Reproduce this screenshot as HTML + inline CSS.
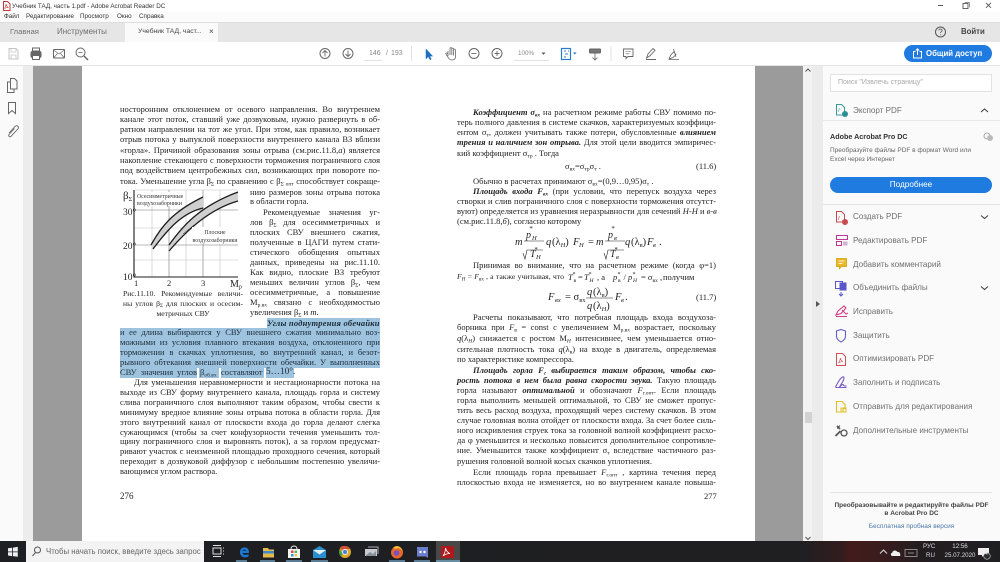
<!DOCTYPE html>
<html lang="ru"><head><meta charset="utf-8"><title>Учебник ТАД</title>
<style>
html,body{margin:0;padding:0}
body{width:1000px;height:562px;overflow:hidden;position:relative;background:#fff;font-family:"Liberation Sans","DejaVu Sans",sans-serif;color:#444}
.r{position:absolute}
.t{position:absolute;white-space:nowrap;line-height:12px;height:12px}
#doc{position:absolute;left:0;top:0;width:1000px;height:562px;font-family:"Liberation Serif",serif;color:#242424;filter:blur(.3px)}
#doc .j{position:absolute;white-space:nowrap;font-size:8.5px;line-height:12px;height:12px;text-align:justify;text-align-last:justify}
#doc .a{position:absolute;white-space:nowrap;font-size:8.5px;line-height:12px;height:12px}
.L{left:120px;width:260px}.Li{left:134px;width:246px}
.S{left:250px;width:130px}.Si{left:263px;width:117px}
.R{left:457px;width:259px}.Ri{left:473px;width:243px}
.hl{position:absolute;background:#9dc3de}
sub{font-size:.65em;line-height:0;vertical-align:-.25em}
sup{font-size:.7em;line-height:0}
.tool{position:absolute;left:853px;font-size:8.1px;color:#707070;line-height:12px;white-space:nowrap}
svg{position:absolute;overflow:visible}
</style></head><body>

<!-- title + menu -->
<div class="r" style="left:0;top:0;width:1000px;height:12px;background:#fff"></div>
<div class="r" style="left:0;top:12px;width:1000px;height:10px;background:#fbfbfb"></div>
<svg style="left:2px;top:1px" width="9" height="10"><path d="M1.5 .5h4l2.5 2.5v6.500h-6.500z" fill="#fff" stroke="#c43a3a"/><path d="M2.500 7.500c1-2 1.500-3 1.500-4.500c.5 2 1 3 2.500 3.500c-1.500 0-3 .3-4 1z" fill="none" stroke="#c43a3a" stroke-width=".6"/></svg>
<div class="t" style="left:12px;top:1px;font-size:6.300px;color:#333">Учебник ТАД, часть 1.pdf - Adobe Acrobat Reader DC</div>
<div class="t" style="left:4px;top:11px;font-size:6.300px;color:#333">Файл</div>
<div class="t" style="left:26px;top:11px;font-size:6.300px;color:#333">Редактирование</div>
<div class="t" style="left:80px;top:11px;font-size:6.300px;color:#333">Просмотр</div>
<div class="t" style="left:117px;top:11px;font-size:6.300px;color:#333">Окно</div>
<div class="t" style="left:139px;top:11px;font-size:6.300px;color:#333">Справка</div>
<svg style="left:936px;top:2px" width="60" height="10" fill="none" stroke="#555"><path d="M2 3.500h5"/><rect x="27" y="1.500" width="5" height="5" stroke-width=".9"/><path d="M29 1v-.3h4.500v4.500" stroke-width=".6"/><path d="M50 .8l5 5M55 .8l-5 5" stroke-width=".9"/></svg>

<!-- tab bar -->
<div class="r" style="left:0;top:22px;width:1000px;height:20px;background:#e6e6e6;border-top:1px solid #ddd;box-sizing:border-box"></div>
<div class="r" style="left:125px;top:23px;width:93px;height:19px;background:#fafafa"></div>
<div class="t" style="left:10px;top:26px;font-size:7.600px;color:#6f6f6f">Главная</div>
<div class="t" style="left:57px;top:26px;font-size:8px;color:#6f6f6f">Инструменты</div>
<div class="t" style="left:138px;top:26px;font-size:6.800px;color:#444">Учебник ТАД, част...</div>
<div class="t" style="left:209px;top:25.500px;font-size:8px;color:#444">×</div>
<svg style="left:934px;top:26px" width="13" height="13" fill="none" stroke="#555"><circle cx="6.500" cy="6" r="5"/><path d="M4.800 4.500c.2-2 3.500-2 3.400 0c0 1.200-1.700 1.200-1.700 2.500" stroke-width=".8"/><circle cx="6.500" cy="8.800" r=".5" fill="#555" stroke="none"/></svg>
<div class="t" style="left:961px;top:26px;font-size:7.800px;font-weight:bold;color:#444">Войти</div>

<!-- toolbar -->
<div class="r" style="left:0;top:42px;width:1000px;height:24px;background:#fff;border-bottom:1px solid #e4e4e4;box-sizing:border-box"></div>
<svg style="left:0;top:42px" width="1000" height="24" fill="none" stroke="#666">
<path d="M9 6.500h7l2 2v8.500h-9z" stroke="#c5c5c5"/><path d="M11 6.500v3.500h5v-3.500M11 17v-4h5v4" stroke="#c5c5c5" stroke-width=".8"/>
<rect x="31" y="9.500" width="10" height="6" rx="1.500" fill="#666"/><rect x="32.500" y="6" width="7" height="3" fill="none"/><rect x="32.500" y="13.500" width="7" height="4" fill="#fff"/>
<rect x="53.500" y="7.500" width="11" height="8.500" rx=".5"/><path d="M53.500 8l5.500 4l5.500-4M53.500 16l4-4.500M64.500 16l-4-4.500" stroke-width=".7"/>
<circle cx="80.500" cy="10.500" r="4.500"/><path d="M84 14l4 4" stroke-width="1.400"/><path d="M78.500 10.500h4" stroke-width=".8"/>
<circle cx="325" cy="11.500" r="5"/><path d="M325 14.500v-6M322.500 11l2.500-2.500l2.500 2.500" stroke-width=".9"/>
<circle cx="348" cy="11.500" r="5"/><path d="M348 8.500v6M345.500 12l2.500 2.500l2.500-2.500" stroke-width=".9"/>
<path d="M364 18.500h18M411.500 4v15" stroke="#e2e2e2"/>
<path d="M426 7l0 10l2.300-2.500l1.700 3.300l1.300-.7l-1.700-3h3z" fill="#1f6fc0" stroke="#1f6fc0" stroke-width=".5"/>
<path d="M448 14v-5M450 13v-6.500a.9.9 0 0 1 1.800 0v6M451.800 13v-6a.9.900 0 0 1 1.800 0v6.500M453.600 13v-5a.9.900 0 0 1 1.800 0v7c0 2-1.500 3-3.500 3c-2 0-3-1-4-3l-2-3c-.5-1 .8-1.500 1.500-.7l.6.700" stroke-width=".8"/>
<circle cx="474" cy="11.500" r="5"/><path d="M471.500 11.500h5" stroke-width=".9"/>
<circle cx="497" cy="11.500" r="5"/><path d="M494.500 11.500h5M497 9v5" stroke-width=".9"/>
<path d="M514 18.500h35" stroke="#e2e2e2"/>
<path d="M541.500 10.500l2 2.400l2-2.400z" fill="#555" stroke="none"/>
<rect x="561.500" y="6.500" width="9" height="11" fill="#fff" stroke="#2a7cc8" stroke-width="1.200"/><path d="M564 9h2M565 12h3M564 15h2M568 9h1" stroke="#2a7cc8"/>
<path d="M573 10.500l1.800 2l1.800-2z" fill="#2a6db0" stroke="none"/>
<rect x="589.500" y="7" width="11" height="4" rx=".7" fill="#777" stroke="#666"/><path d="M595 11v7M592.500 15.500l2.500 2.500l2.500-2.500" stroke-width=".8"/>
<path d="M611 4v15" stroke="#e2e2e2"/>
<path d="M623.500 7h9.500v7.500h-5l-2 2v-2h-2.500z" stroke-width=".9"/><path d="M625.500 9.500h5.500M625.500 11.800h4" stroke-width=".6"/>
<path d="M646.500 16l1.500-4l5-5.500l2 1.800l-5 5.500zM646 17.500h10" stroke-width=".9"/>
<path d="M669 17l1.500-3.500l3-3.500l2.500 2.500l-3 3zM673.500 7l2.500 8M669 17.500h10" stroke-width=".8"/>
</svg>
<div class="t" style="left:369px;top:47.500px;font-size:7px;color:#888">146</div>
<div class="t" style="left:386px;top:47.500px;font-size:7px;color:#888">/</div>
<div class="t" style="left:391px;top:47.500px;font-size:7px;color:#888">193</div>
<div class="t" style="left:518px;top:47.500px;font-size:6.300px;color:#888">100%</div>
<div class="r" style="left:904px;top:45px;width:88px;height:17px;border-radius:9px;background:#1f7be0"></div>
<svg style="left:912px;top:48px" width="12" height="11" fill="none" stroke="#fff"><path d="M3.500 3.500h-2v6.500h8v-6.500h-2M5.500 7v-6M3.800 2.500l1.700-1.700l1.700 1.700"/></svg>
<div class="t" style="left:926px;top:47.500px;font-size:7.800px;font-weight:bold;color:#fff">Общий доступ</div>

<!-- side/rail and grey -->
<div class="r" style="left:0;top:66px;width:23px;height:475px;background:#fafafa"></div>
<div class="r" style="left:23px;top:66px;width:10px;height:475px;background:#ececec"></div>
<div class="r" style="left:33px;top:66px;width:49px;height:475px;background:#9b9b9b"></div>
<div class="r" style="left:82px;top:66px;width:673px;height:475px;background:#fff"></div>
<div class="r" style="left:755px;top:66px;width:48px;height:475px;background:#9b9b9b"></div>
<div class="r" style="left:803px;top:66px;width:9px;height:475px;background:#f2f2f2"></div>
<div class="r" style="left:805px;top:412px;width:7px;height:11px;background:#d2d2d2"></div>
<div class="r" style="left:812px;top:66px;width:11px;height:475px;background:#ebebeb"></div>
<div class="r" style="left:823px;top:66px;width:177px;height:475px;background:#fafafa"></div>
<svg style="left:0;top:66px" width="30" height="80" fill="none" stroke="#666">
<path d="M10.500 12.500h4l2.500 2.500v8h-6.500z"/><path d="M10.500 16h-3v10.500h6.500v-3.500"/>
<path d="M8.500 36.500h7v11l-3.500-3l-3.500 3z"/>
<path d="M9 67l6-6.500c2-2 4.500.5 2.800 2.500l-7 7.500c-1 1-2.800-.5-1.800-2l5.500-6" stroke-width=".9"/>
</svg>
<svg style="left:804px;top:67px" width="8" height="480" fill="none" stroke="#555"><path d="M1.500 4.500l2.500-2.500l2.500 2.500M1.500 470l2.500 2.500l2.500-2.500"/></svg>
<svg style="left:815px;top:300px" width="6" height="8"><path d="M1 1l4 3l-4 3z" fill="#555"/></svg>

<!-- document -->
<div id="doc">
<div class="hl" style="left:267px;top:318px;width:113px;height:10px"></div>
<div class="hl" style="left:120px;top:328px;width:260px;height:10px"></div>
<div class="hl" style="left:120px;top:338px;width:260px;height:10px"></div>
<div class="hl" style="left:120px;top:348px;width:260px;height:10px"></div>
<div class="hl" style="left:120px;top:358px;width:260px;height:10px"></div>
<div class="hl" style="left:120px;top:368px;width:77px;height:10px"></div>
<div class="hl" style="left:199px;top:368px;width:20px;height:10px"></div>
<div class="hl" style="left:221px;top:368px;width:43px;height:10px"></div>
<div class="hl" style="left:266px;top:368px;width:28px;height:10px"></div>

<div class="j L" style="top:103px">носторонним отклонением от осевого направления. Во внутреннем</div>
<div class="j L" style="top:113px">канале этот поток, ставший уже дозвуковым, нужно развернуть в об-</div>
<div class="j L" style="top:123px">ратном направлении на тот же угол. При этом, как правило, возникает</div>
<div class="j L" style="top:133px">отрыв потока у выпуклой поверхности внутреннего канала ВЗ вблизи</div>
<div class="j L" style="top:144px">«горла». Причиной образования зоны отрыва (см.рис.11.8,<i>а</i>) является</div>
<div class="j L" style="top:154px">накопление стекающего с поверхности торможения пограничного слоя</div>
<div class="j L" style="top:164px">под воздействием центробежных сил, возникающих при повороте по-</div>
<div class="j L" style="top:175px">тока. Уменьшение угла β<sub>Σ</sub> по сравнению с β<sub>Σ опт</sub> способствует сокраще-</div>

<div class="j S" style="top:186px">нию размеров зоны отрыва потока</div>
<div class="a S" style="top:195px">в области горла.</div>
<div class="j Si" style="top:206px">Рекомендуемые значения уг-</div>
<div class="j S" style="top:216px">лов β<sub>Σ</sub> для осесимметричных и</div>
<div class="j S" style="top:226px">плоских СВУ внешнего сжатия,</div>
<div class="j S" style="top:236px">полученные в ЦАГИ путем стати-</div>
<div class="j S" style="top:246px">стического обобщения опытных</div>
<div class="j S" style="top:256px">данных, приведены на рис.11.10.</div>
<div class="j S" style="top:266px">Как видно, плоские ВЗ требуют</div>
<div class="j S" style="top:276px">меньших величин углов β<sub>Σ</sub>, чем</div>
<div class="j S" style="top:286px">осесимметричные, а повышение</div>
<div class="j S" style="top:296px">M<sub>р.вх</sub> связано с необходимостью</div>
<div class="a S" style="top:306px">увеличения β<sub>Σ</sub> и <i>m</i>.</div>

<div class="j" style="left:123px;width:120px;top:288px;font-size:7.600px">Рис.11.10. Рекомендуемые величи-</div>
<div class="j" style="left:123px;width:120px;top:298px;font-size:7.600px">ны углов β<sub>Σ</sub> для плоских и осесим-</div>
<div class="a" style="left:123px;width:120px;top:308px;text-align:center;font-size:7.600px">метричных СВУ</div>

<div class="a" style="left:267px;top:317px;font-weight:bold;font-style:italic;letter-spacing:.2px;color:#1c2b38">Углы поднутрения обечайки</div>
<div class="j L" style="top:326px;color:#1c2b38">и ее длина выбираются у СВУ внешнего сжатия минимально воз-</div>
<div class="j L" style="top:336px;color:#1c2b38">можными из условия плавного втекания воздуха, отклоненного при</div>
<div class="j L" style="top:346px;color:#1c2b38">торможении в скачках уплотнения, во внутренний канал, и безот-</div>
<div class="j L" style="top:356px;color:#1c2b38">рывного обтекания внешней поверхности обечайки. У выполненных</div>
<div class="j" style="left:120px;width:77px;top:366px;color:#1c2b38">СВУ значения углов</div>
<div class="a" style="left:200px;top:366px;color:#1c2b38">β<sub>об.вх</sub></div>
<div class="j" style="left:221px;width:43px;top:366px;color:#1c2b38">составляют</div>
<div class="a" style="left:266px;top:366px;color:#1c2b38;font-size:9.300px">5…10°.</div>

<div class="j Li" style="top:376px">Для уменьшения неравномерности и нестационарности потока на</div>
<div class="j L" style="top:386px">выходе из СВУ форму внутреннего канала, площадь горла и систему</div>
<div class="j L" style="top:396px">слива пограничного слоя выполняют таким образом, чтобы свести к</div>
<div class="j L" style="top:406px">минимуму вредное влияние зоны отрыва потока в области горла. Для</div>
<div class="j L" style="top:416px">этого внутренний канал от плоскости входа до горла делают слегка</div>
<div class="j L" style="top:426px">сужающимся (чтобы за счет конфузорности течения уменьшить тол-</div>
<div class="j L" style="top:435px">щину пограничного слоя и выровнять поток), а за горлом предусмат-</div>
<div class="j L" style="top:445px">ривают участок с неизменной площадью проходного сечения, который</div>
<div class="j L" style="top:455px">переходит в дозвуковой диффузор с небольшим постепенно увеличи-</div>
<div class="a L" style="top:465px">вающимся углом раствора.</div>
<div class="a" style="left:120px;top:490px;font-size:9px">276</div>

<!-- figure -->
<svg style="left:120px;top:185px" width="130" height="105">
<path d="M15 5H118M15 75h103M15 43h103M32 5v87M100 5v87M66 5v87" stroke="#c4c4c4" stroke-width=".6" fill="none"/>
<path d="M49 5v87M83 5v87M15 25h103M15 60h103" stroke="#777" stroke-width=".6" fill="none"/>
<path d="M31 60C41 42 52 27 83 12V23C62 28 48 44 33 64Z" fill="#cfcfcf"/>
<path d="M49 60C62 42 78 22 118 7V16C90 24 68 44 49 66Z" fill="#cfcfcf"/>
<path d="M31 60C41 42 52 27 83 12M33 64C48 44 62 28 83 23M49 60C62 42 78 22 118 7M49 66C68 44 90 24 118 16" fill="none" stroke="#1d1d1d" stroke-width="1.300"/>
<path d="M14 5V92H118" fill="none" stroke="#1d1d1d" stroke-width="1.100"/>
<rect x="17" y="7" width="47" height="14" fill="#fff"/>
<rect x="72" y="42" width="47" height="17" fill="#fff"/>
<path d="M63 49L74 40" stroke="#333" stroke-width=".5"/>
<text x="17" y="13" font-size="5.800" font-family="Liberation Serif" fill="#333">Осесимметричные</text>
<text x="17" y="20" font-size="5.800" font-family="Liberation Serif" fill="#333">воздухозаборники</text>
<text x="95" y="49" font-size="5.800" font-family="Liberation Serif" fill="#333" text-anchor="middle">Плоские</text>
<text x="95" y="57" font-size="5.800" font-family="Liberation Serif" fill="#333" text-anchor="middle">воздухозаборники</text>
<text x="3" y="14" font-size="11" font-family="Liberation Serif" fill="#222">β<tspan font-size="6" dy="2">Σ</tspan></text>
<text x="3" y="30" font-size="9.500" font-family="Liberation Serif" fill="#222">30°</text>
<text x="3" y="64" font-size="9.500" font-family="Liberation Serif" fill="#222">20°</text>
<text x="3" y="95" font-size="9.500" font-family="Liberation Serif" fill="#222">10°</text>
<text x="14" y="101" font-size="8.500" font-family="Liberation Serif" fill="#222">1</text>
<text x="47" y="101" font-size="8.500" font-family="Liberation Serif" fill="#222">2</text>
<text x="81" y="101" font-size="8.500" font-family="Liberation Serif" fill="#222">3</text>
<text x="110" y="102" font-size="10" font-family="Liberation Serif" fill="#222">M<tspan font-size="6" dy="1.500">р</tspan></text>
</svg>

<!-- right page -->
<div class="j Ri" style="top:106px"><b><i>Коэффициент σ<sub>вх</sub></i></b> на расчетном режиме работы СВУ помимо по-</div>
<div class="j R" style="top:116px">терь полного давления в системе скачков, характеризуемых коэффици-</div>
<div class="j R" style="top:126px">ентом σ<sub>т</sub>, должен учитывать также потери, обусловленные <b><i>влиянием</i></b></div>
<div class="j R" style="top:136px"><b><i>трения и наличием зон отрыва.</i></b> Для этой цели вводится эмпиричес-</div>
<div class="a R" style="top:147px">кий коэффициент σ<sub>тр</sub> . Тогда</div>
<div class="a" style="left:565px;top:160px">σ<sub>вх</sub>=σ<sub>тр</sub>σ<sub>т</sub> .</div>
<div class="a" style="left:696px;top:160px;font-size:8.500px">(11.6)</div>
<div class="a" style="left:473px;top:175px">Обычно в расчетах принимают σ<sub>вх</sub>=(0,9…0,95)σ<sub>т</sub> .</div>
<div class="j Ri" style="top:185px"><b><i>Площадь входа F<sub>вх</sub></i></b> (при условии, что перепуск воздуха через</div>
<div class="j R" style="top:195px">створки и слив пограничного слоя с поверхности торможения отсутст-</div>
<div class="j R" style="top:205px">вуют) определяется из уравнения неразрывности для сечений <i>Н-Н</i> и <i>в-в</i></div>
<div class="a R" style="top:215px">(см.рис.11.8,<i>б</i>), согласно которому</div>

<svg style="left:450px;top:220px" width="270" height="95" font-family="Liberation Serif" fill="#242424" font-size="10.500">
<g font-style="italic">
<text x="65" y="25">m</text><text x="76" y="18" font-size="10">p</text><text x="82" y="20" font-size="6.500">H</text><text x="79" y="11" font-size="7">*</text>
<text x="96" y="25">q</text>
<text x="123" y="25">F</text><text x="129" y="27" font-size="6.500">H</text>
<text x="146" y="25">m</text><text x="158" y="18" font-size="10">p</text><text x="164" y="20" font-size="6.500">в</text><text x="161" y="11" font-size="7">*</text>
<text x="175" y="25">q</text><text x="197" y="25">F</text><text x="203" y="27" font-size="6.500">в</text>
<text x="80" y="37" font-size="10">T</text><text x="86" y="39" font-size="6.500">H</text><text x="84" y="32" font-size="7">*</text>
<text x="160" y="37" font-size="10">T</text><text x="166" y="39" font-size="6.500">в</text><text x="164" y="32" font-size="7">*</text>
</g>
<text x="102" y="25">(λ<tspan font-size="6.500" dy="2" font-style="italic">H</tspan><tspan dy="-2">)</tspan></text>
<text x="138" y="25">=</text>
<text x="181" y="25">(λ<tspan font-size="6.500" dy="2">в</tspan><tspan dy="-2">)</tspan></text>
<text x="209" y="25">.</text>
<path d="M74 21h20M155 21h20M73 33l2 6l2-9h16M154 33l2 6l2-9h16" fill="none" stroke="#242424" stroke-width=".6"/>

<!-- T* line -->
<g font-size="8.500">
<text x="118" y="60" font-style="italic">T</text><text x="123.500" y="62" font-size="5.500">в</text><text x="122.500" y="56" font-size="6">*</text>
<text x="128" y="60">=</text>
<text x="134" y="60" font-style="italic">T</text><text x="139.500" y="62" font-size="5.500" font-style="italic">H</text><text x="138.500" y="56" font-size="6">*</text>
<text x="147" y="60">, а</text>
<text x="163" y="60" font-style="italic">p</text><text x="168" y="62" font-size="5.500">в</text><text x="167.500" y="56" font-size="6">*</text>
<text x="173.500" y="60">/</text>
<text x="178" y="60" font-style="italic">p</text><text x="183" y="62" font-size="5.500" font-style="italic">H</text><text x="182.500" y="56" font-size="6">*</text>
<text x="191" y="60">= σ<tspan font-size="5.500" dy="2">вх</tspan><tspan dy="-2"> ,</tspan></text>
<text x="213" y="60">получим</text>
</g>

<!-- 11.7 -->
<g font-style="italic">
<text x="98" y="80">F</text><text x="105" y="82" font-size="6.500">вх</text>
<text x="137" y="75" font-size="10.500">q</text>
<text x="137" y="89" font-size="10.500">q</text>
<text x="165" y="80">F</text><text x="171" y="82" font-size="6.500">в</text>
</g>
<text x="115" y="80">= σ<tspan font-size="6.500" dy="2">вх</tspan></text>
<text x="143" y="75" font-size="10.500">(λ<tspan font-size="6.500" dy="2">в</tspan><tspan dy="-2">)</tspan></text>
<text x="143" y="89" font-size="10.500">(λ<tspan font-size="6.500" dy="2" font-style="italic">H</tspan><tspan dy="-2">)</tspan></text>
<text x="175" y="80">.</text>
<path d="M136 78h27" stroke="#242424" stroke-width=".6"/>
</svg>
<div class="j Ri" style="top:259px">Принимая во внимание, что на расчетном режиме (когда φ=1)</div>
<div class="j" style="left:457px;width:107px;top:271px;font-size:7.800px"><i>F<sub>H</sub></i> = <i>F</i><sub>вх</sub> , а также учитывая, что</div>
<div class="a" style="left:696px;top:291px;font-size:8.500px">(11.7)</div>
<div class="j Ri" style="top:311px">Расчеты показывают, что потребная площадь входа воздухоза-</div>
<div class="j R" style="top:321px">борника при <i>F</i><sub>в</sub> = const с увеличением M<sub>р.вх</sub> возрастает, поскольку</div>
<div class="j R" style="top:332px"><i>q</i>(λ<sub><i>H</i></sub>) снижается с ростом M<sub><i>H</i></sub> интенсивнее, чем уменьшается отно-</div>
<div class="j R" style="top:343px">сительная плотность тока <i>q</i>(λ<sub>в</sub>) на входе в двигатель, определяемая</div>
<div class="a R" style="top:353px">по характеристике компрессора.</div>
<div class="j Ri" style="top:364px"><b><i>Площадь горла F<sub>г</sub> выбирается таким образом, чтобы ско-</i></b></div>
<div class="j R" style="top:374px"><b><i>рость потока в нем была равна скорости звука.</i></b> Такую площадь</div>
<div class="j R" style="top:384px">горла называют <b><i>оптимальной</i></b> и обозначают <i>F</i><sub>г.опт</sub>. Если площадь</div>
<div class="j R" style="top:394px">горла выполнить меньшей оптимальной, то СВУ не сможет пропус-</div>
<div class="j R" style="top:404px">тить весь расход воздуха, проходящий через систему скачков. В этом</div>
<div class="j R" style="top:414px">случае головная волна отойдет от плоскости входа. За счет более силь-</div>
<div class="j R" style="top:424px">ного искривления струек тока за головной волной коэффициент расхо-</div>
<div class="j R" style="top:434px">да φ уменьшится и несколько повысится дополнительное сопротивле-</div>
<div class="j R" style="top:444px">ние. Уменьшится также коэффициент σ<sub>т</sub> вследствие частичного раз-</div>
<div class="a R" style="top:455px">рушения головной волной косых скачков уплотнения.</div>
<div class="j Ri" style="top:466px">Если площадь горла превышает <i>F</i><sub>г.опт</sub> , картина течения перед</div>
<div class="j R" style="top:476px">плоскостью входа не изменяется, но во внутреннем канале повыша-</div>
<div class="a" style="left:704px;top:490px;font-size:8.500px">277</div>
</div>

<!-- right tool panel -->
<div class="r" style="left:830px;top:74px;width:162px;height:18px;background:#fff;border:1px solid #e2e2e2;box-sizing:border-box"></div>
<div class="t" style="left:838px;top:77px;font-size:7px;color:#a8a8a8">Поиск "Извлечь страницу"</div>
<div class="r" style="left:823px;top:120px;width:177px;height:1px;background:#e8e8e8"></div>
<div class="r" style="left:823px;top:204px;width:177px;height:1px;background:#e4e4e4"></div>
<div class="r" style="left:830px;top:492px;width:162px;height:1px;background:#e4e4e4"></div>
<div class="tool" style="top:105px">Экспорт PDF</div>
<div class="t" style="left:830px;top:131px;font-size:7.200px;font-weight:bold;color:#333">Adobe Acrobat Pro DC</div>
<div class="t" style="left:830px;top:145px;font-size:6.500px;color:#666">Преобразуйте файлы PDF в формат Word или</div>
<div class="t" style="left:830px;top:154px;font-size:6.500px;color:#666">Excel через Интернет</div>
<div class="r" style="left:830px;top:177px;width:162px;height:16px;border-radius:8px;background:#1f7be0"></div>
<div class="t" style="left:830px;top:179px;width:162px;text-align:center;font-size:8.200px;color:#fff">Подробнее</div>
<div class="tool" style="top:211px">Создать PDF</div>
<div class="tool" style="top:235px">Редактировать PDF</div>
<div class="tool" style="top:259px">Добавить комментарий</div>
<div class="tool" style="top:282px">Объединить файлы</div>
<div class="tool" style="top:306px">Исправить</div>
<div class="tool" style="top:330px">Защитить</div>
<div class="tool" style="top:353px">Оптимизировать PDF</div>
<div class="tool" style="top:377px">Заполнить и подписать</div>
<div class="tool" style="top:401px">Отправить для редактирования</div>
<div class="tool" style="top:425px">Дополнительные инструменты</div>
<div class="t" style="left:823px;top:500px;width:177px;text-align:center;font-size:6.500px;font-weight:bold;color:#444">Преобразовывайте и редактируйте файлы PDF</div>
<div class="t" style="left:823px;top:508px;width:177px;text-align:center;font-size:6.500px;font-weight:bold;color:#444">в Acrobat Pro DC</div>
<div class="t" style="left:823px;top:521px;width:177px;text-align:center;font-size:6.500px;color:#4a78a8">Бесплатная пробная версия</div>

<svg style="left:832px;top:104px" width="168" height="345" fill="none">
<!-- export --><path d="M4.500 .5h5l3 3v7.500h-8z" stroke="#3a9a9a"/><circle cx="13" cy="10" r="3" fill="#2b8f94"/><path d="M6 8c1-1.500 1.300-3 1.300-4" stroke="#3a9a9a" stroke-width=".6"/>
<path d="M149 8l3.500-3l3.500 3" stroke="#444" stroke-width="1.100"/>
<!-- cloud icon --><circle cx="155" cy="32" r="3" stroke="#aaa"/><circle cx="158" cy="34" r="3" fill="#bbb"/>
<!-- create --><path d="M4.500 107.500h5l3 3v7.500h-8z" stroke="#c8494f"/><circle cx="13" cy="118" r="3" fill="#c8494f"/><path d="M6 116c1-1.500 1.300-3 1.300-4" stroke="#c8494f" stroke-width=".6"/>
<path d="M149 111.500l3.500 3l3.500-3" stroke="#444" stroke-width="1.100"/>
<!-- edit --><rect x="4.500" y="131.500" width="11" height="4" stroke="#bf3a96"/><rect x="4.500" y="137.500" width="5" height="4" stroke="#bf3a96"/><rect x="11" y="137.500" width="4.500" height="4" fill="#cdb4d0"/>
<!-- comment --><path d="M4.500 154.500h10v8h-5l-2 2v-2h-3z" fill="#e8b82c" stroke="#dbab20"/><path d="M6.500 157h6M6.500 159.500h4" stroke="#fff" stroke-width=".7"/>
<!-- merge --><rect x="3.500" y="177.500" width="7" height="7" stroke="#5a55c8"/><rect x="7.500" y="178.500" width="7" height="8" fill="#5a55c8"/><path d="M9 188v4M7 190l2 2l2-2" stroke="#5a55c8"/>
<path d="M149 182.500l3.500 3l3.500-3" stroke="#444" stroke-width="1.100"/>
<!-- fix --><path d="M4 211l2-4l6-5l2 2l-5 5.500zM10 206l4 4l2-1M4 212.500h11" stroke="#d13d88" stroke-width="1.100"/>
<!-- protect --><path d="M9 225.500l4.500 1.500v5c0 3.500-2.500 5-4.500 6c-2-1-4.500-2.500-4.500-6v-5z" stroke="#6060c4" stroke-width="1.100"/>
<!-- optimize --><path d="M4.500 249.500h6l3 3v9h-9z" stroke="#d05055"/><path d="M6.500 259c1-1.500 1.800-3 1.800-5c.5 2 1.500 3 2.500 3.500c-1.500 0-3 .5-4.300 1.500z" stroke="#d05055" stroke-width=".6"/>
<!-- fill --><path d="M3.500 283c2-4 5-9 7-10c2-1 2 2 0 5l-3 5c2-2 3-3 4-2c0 1 1 1 3 1M3.500 283.500h11" stroke="#7757c0" stroke-width="1.100"/>
<!-- send --><path d="M4.500 297.500h5.500l3 3v4h-2v3.500h-6.500z" stroke="#e2bd25" stroke-width="1.100"/><rect x="9" y="304" width="5" height="4" stroke="#e2bd25"/>
<!-- more --><path d="M5 322l3 3M3.500 332l5-5" stroke="#555" stroke-width="1.800"/><path d="M8 321.500l-3 3" stroke="#555"/><circle cx="12" cy="329" r="3" stroke="#555" stroke-width="1.300"/>
</svg>

<!-- taskbar -->
<div class="r" style="left:0;top:541px;width:1000px;height:21px;background:linear-gradient(90deg,#1e1f22 0,#1f1f22 80%,#311c1e 84%,#431c1c 85%,#3a1c1d 88%,#231d20 92%,#1f1f22 100%)"></div>
<svg style="left:8px;top:547px" width="10" height="10"><path d="M0 1.300l4-.6v3.800h-4zM4.800 .6l5-.7v4.600h-5zM0 5.300h4v3.800l-4-.6zM4.800 5.300h5v4.500l-5-.7z" fill="#eee"/></svg>
<div class="r" style="left:26px;top:541px;width:178px;height:21px;background:#f3f3f3"></div>
<svg style="left:31px;top:546px" width="11" height="11" fill="none" stroke="#555"><circle cx="6.500" cy="4" r="3"/><path d="M4.500 6.500l-3 3.500"/></svg>
<div class="t" style="left:46px;top:546px;font-size:7.800px;color:#666">Чтобы начать поиск, введите здесь запрос</div>
<svg style="left:0;top:541px" width="1000" height="21">
<path d="M213 7h8v6h-8zM223 7h1M223 10h1M223 13h1M213 4.500h8M213 15.500h8" fill="none" stroke="#ddd"/>
<path d="M240 12c-.5-6 5.500-7 8-4c1 1.200 1 3 .8 4h-6.300c.2 2 3.500 2.500 6 1v2.500c-3.500 1.800-8 .7-8.500-3.500zM242.500 9.800h3.800c-.3-1.500-3.300-1.500-3.800 0z" fill="#1b79d6"/>
<path d="M263 7h5l1 1.500h5v8h-11z" fill="#e6b94d"/><rect x="263" y="10" width="11" height="2.500" fill="#3f89c9"/>
<rect x="288" y="8" width="12" height="9" fill="#f4f4f4"/><path d="M291 8c0-4 6-4 6 0" fill="none" stroke="#f4f4f4"/><rect x="291" y="9.500" width="2.500" height="2.500" fill="#e44"/><rect x="294.500" y="9.500" width="2.500" height="2.500" fill="#5b5"/><rect x="291" y="13" width="2.500" height="2.500" fill="#39d"/><rect x="294.500" y="13" width="2.500" height="2.500" fill="#ec3"/>
<path d="M313 9l6.500-4l6.500 4v8h-13z" fill="#2a8fd0"/><path d="M313 9l6.500 4.500l6.500-4.500" fill="#e4eef4"/>
<circle cx="345" cy="11" r="6" fill="#e0a82e"/><path d="M345 5a6 6 0 0 1 5.200 3h-5.200a3 3 0 0 0-2.800 1.500l-2.200-3a6 6 0 0 1 5-1.500z" fill="#d64b3c"/><path d="M339.800 8l2.800 5l-1.400 2.600a6 6 0 0 1-1.400-7.600z" fill="#3e9c4b"/><circle cx="345" cy="11" r="2.500" fill="#3f7fd5" stroke="#eee"/>
<path d="M365 8h12v7h-12z" fill="#c8ccd0"/><path d="M366 14l4-3l3 2l3-3v5h-10z" fill="#8a9097"/><path d="M368 6h10v7" fill="none" stroke="#aab"/>
<circle cx="397" cy="11.500" r="6" fill="#e8682a"/><path d="M393 7c2-2 4-2.500 6-1.500c2 1 3.500 3 3.500 5c-1-2.500-3-3-4.500-3.500c-1 .8-3 1-5 0z" fill="#f8c23a"/><circle cx="396.500" cy="12" r="2.800" fill="#7b4fc4"/>
<path d="M417 6h11v11l-2-1.500h-9z" fill="#6a7ec9"/><circle cx="420.500" cy="11" r="1.200" fill="#fff"/><circle cx="424.500" cy="11" r="1.200" fill="#fff"/>
<rect x="436" y="0" width="24" height="21" fill="#484848"/><rect x="441" y="5" width="13" height="12" fill="#b0181c"/><path d="M443 15c2-3 2.500-5 2.500-8c.7 3 2 4.500 4.500 5.500c-2.500 0-5 .8-7 2.500z" fill="none" stroke="#fff" stroke-width=".8"/>
<path d="M236 20h11M260 20h15M286 20h16M311 20h17M389 20h16M414 20h16M436 20h24" stroke="#7cb5d8" stroke-width="1.300"/>
<path d="M880 12.500l3.500-3.500l3.500 3.500" fill="none" stroke="#ddd"/>
<path d="M892.500 15c-2 0-2.300-3-.3-3.300c.3-2.500 4-3 5-.8c2-.4 3.500 1 3 4.100z" fill="#eee"/>
<rect x="905" y="8.500" width="12" height="7" fill="none" stroke="#888"/><path d="M908 12h6" stroke="#888"/>
<path d="M978 7h11v7h-5l-2 2v-2h-4z" fill="#eee"/>
<circle cx="987" cy="15" r="3.300" fill="#2b2b2b" stroke="#ccc" stroke-width=".6"/>
</svg>
<div class="t" style="left:985px;top:550.500px;font-size:5px;color:#eee;line-height:7px;height:7px">4</div>
<div class="t" style="left:923px;top:541px;font-size:6.200px;color:#ddd">РУС</div>
<div class="t" style="left:926px;top:550px;font-size:6.200px;color:#ddd">RU</div>
<div class="t" style="left:948px;top:541px;font-size:6.200px;color:#ddd;width:24px;text-align:center">12:56</div>
<div class="t" style="left:941px;top:550px;font-size:6.200px;color:#ddd;width:38px;text-align:center">25.07.2020</div>
</body></html>
